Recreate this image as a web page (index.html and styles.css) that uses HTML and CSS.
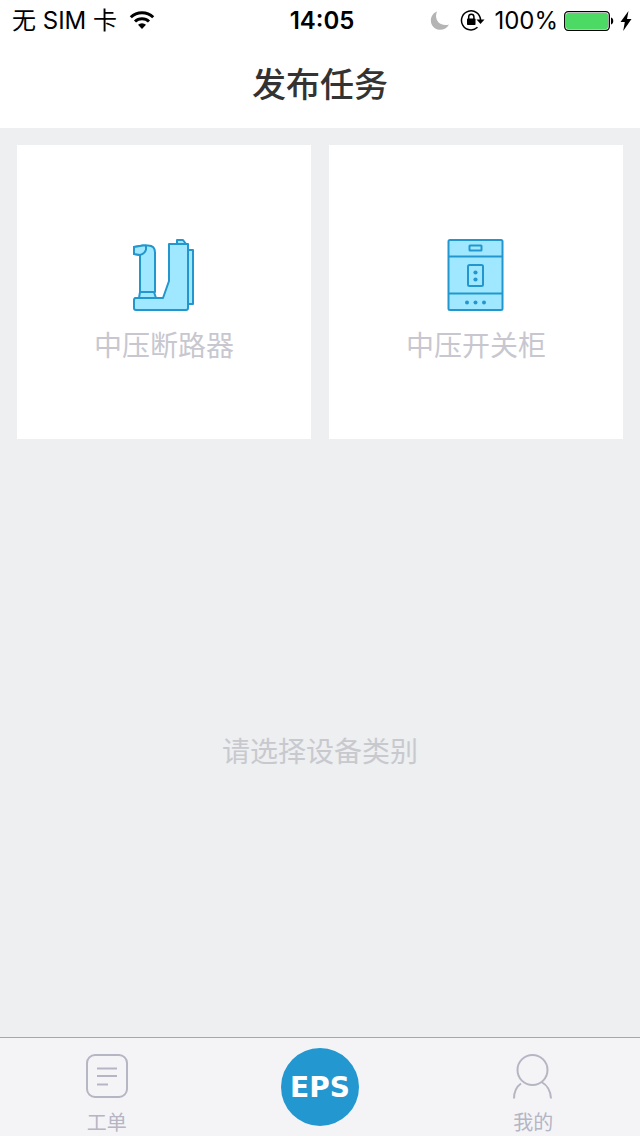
FILE: index.html
```html
<!DOCTYPE html>
<html lang="zh-CN">
<head>
<meta charset="utf-8">
<meta name="viewport" content="width=device-width, initial-scale=1">
<title>发布任务</title>
<link rel="stylesheet" href="styles.css">
</head>
<body>
<div class="status">
  <div class="status-side">
    <span>无 SIM 卡</span>
    <svg width="26" height="20" viewBox="0 0 26 20" fill="none" stroke="#000" stroke-width="3">
      <path d="M1.8 6.200A16 16 0 0 1 24.2 6.200M6 10.500a10 10 0 0 1 14 0"/>
      <path d="M13 18l-4-4.2a5.8 5.8 0 0 1 8 0z" fill="#000" stroke="none"/>
    </svg>
  </div>
  <time class="clock">14:05</time>
  <div class="status-side status-right">
    <svg width="20" height="20" viewBox="0 0 20 20"><path d="M7 .5C-2 4-1 18 9.500 18.800Q16 19 19 13.500C10 16 3.500 9 7 .5z" fill="#b4b4b4"/></svg>
    <svg class="lock" width="26" height="22" viewBox="0 0 26 22" fill="none" stroke="#000">
      <path d="M17.500 17.300A9.500 9.500 0 1 1 20.500 10" stroke-width="1.500"/>
      <path d="M16.500 9.500h8L20.500 14z" fill="#000" stroke="none"/>
      <rect x="7" y="8.500" width="8.500" height="6.500" rx=".8" fill="#000" stroke="none"/>
      <path d="M8.700 9V6.800a2.600 2.600 0 0 1 5.200 0V9" stroke-width="1.500"/>
    </svg>
    <span>100%</span>
    <svg width="50" height="20" viewBox="0 0 50 20">
      <rect x=".7" y=".7" width="44.600" height="18.600" rx="3.500" fill="#fff" stroke="#000" stroke-width="1.300"/>
      <rect x="2" y="2" width="42" height="16" rx="2" fill="#4cd964"/>
      <path d="M47 6.500c3 .8 3 6.200 0 7z"/>
    </svg>
    <svg width="12" height="20" viewBox="0 0 12 20"><path d="M8.500 0L.500 11h4.300L3.200 20l8.300-12H7z"/></svg>
  </div>
</div>
<header class="header"><h1 class="title">发布任务</h1></header>
<main class="main">
  <div class="cards">
    <button class="card" type="button">
      <svg width="64" height="74" viewBox="0 0 64 74" fill="#a0e8ff" stroke="#2397cd" stroke-width="2" stroke-linejoin="round">
        <path d="M56 12h5v54h-5z"/>
        <path d="M45 6V2h6l3 4z"/>
        <path d="M8 54V17l-6-1V9l9-1.500h5q7 0 7 7V54z"/>
        <path d="M2 9l9-1.500h3v4q-1 4-6 5.500l-6-1z"/>
        <path d="M3 60h28l6-17V6h19v64q0 2-2 2H4q-2 0-2-2v-8q0-2 2-2z"/>
        <path d="M7 60l1-6h14l2 6z"/>
      </svg>
      <span>中压断路器</span>
    </button>
    <button class="card" type="button">
      <svg width="58" height="74" viewBox="0 0 58 74" fill="#a0e8ff" stroke="#2397cd" stroke-width="2" stroke-linejoin="round">
        <rect x="1.500" y="2" width="54" height="70" rx="1.500"/>
        <path d="M2 18.500h54M2 55.500h54"/>
        <rect x="22.500" y="7.500" width="12" height="5" rx=".5"/>
        <rect x="21" y="27" width="15" height="21" rx="1.500"/>
        <g fill="#2397cd" stroke="none"><circle cx="28.500" cy="34.500" r="2.100"/><circle cx="28.500" cy="41.500" r="2.100"/><circle cx="20" cy="64.500" r="2"/><circle cx="28.500" cy="64.500" r="2"/><circle cx="37" cy="64.500" r="2"/></g>
      </svg>
      <span>中压开关柜</span>
    </button>
  </div>
  <p class="hint">请选择设备类别</p>
</main>
<nav class="tabs">
  <a class="tab" href="#orders">
    <svg width="42" height="46" viewBox="0 0 42 46" fill="none" stroke="#b6b5c4" stroke-width="2">
      <rect x="1" y="2" width="40" height="42" rx="8"/>
      <path d="M11 15.500h20M11 23h20M11 31.500h11"/>
    </svg>
    <span>工单</span>
  </a>
  <a class="brand" href="#publish">EPS</a>
  <a class="tab" href="#mine">
    <svg width="42" height="46" viewBox="0 0 42 46" fill="none" stroke="#b6b5c4" stroke-width="2">
      <circle cx="20.500" cy="17" r="15"/>
      <path d="M9 30.500q-7 5-7 15M29.500 29q9 5 9.500 16.500"/>
    </svg>
    <span>我的</span>
  </a>
</nav>
</body>
</html>
```
FILE: styles.css
```css
* {
  box-sizing: border-box;
}

body {
  display: flex;
  flex-direction: column;
  min-height: 100vh;
  margin: 0;
  background: #edeff1;
  font-family: Inter, "Noto Sans CJK SC", sans-serif;
}

svg {
  display: block;
  flex: none;
}

.status {
  display: grid;
  grid-template-columns: 1fr auto 1fr;
  align-items: center;
  padding: 2px 8px 0 12px;
  background: #fff;
  color: #000;
  font-size: 24px;
  line-height: 38px;
  white-space: nowrap;
}

.status-side {
  display: flex;
  align-items: center;
  gap: 12px;
}

.status-right {
  justify-content: flex-end;
  gap: 6px;
}

.lock {
  margin: 0 2px 0 4px;
}

.clock {
  font-weight: 600;
}

.header {
  background: #fff;
}

.title {
  margin: 0;
  padding-top: 2px;
  color: #333;
  font-size: 34px;
  font-weight: 500;
  line-height: 86px;
  text-align: center;
}

.main {
  display: flex;
  flex: 1;
  flex-direction: column;
  padding: 17px;
}

.cards {
  display: grid;
  grid-template-columns: 1fr 1fr;
  gap: 18px;
}

.card {
  display: flex;
  flex-direction: column;
  align-items: center;
  justify-content: center;
  gap: 14px;
  aspect-ratio: 1;
  padding: 20px 0 0;
  border: 0;
  background: #fff;
  color: #c8c7cf;
  font: inherit;
  font-size: 28px;
  line-height: 40px;
}

.hint {
  margin: auto;
  padding-top: 44px;
  color: #c8c9ce;
  font-size: 28px;
  line-height: 40px;
}

.tabs {
  display: grid;
  grid-template-columns: 1fr 1fr 1fr;
  justify-items: center;
  height: 99px;
  border-top: 1px solid #a5a7ab;
  background: #f4f4f7;
}

.tab {
  display: flex;
  flex-direction: column;
  align-items: center;
  gap: 8px;
  padding-top: 15px;
  color: #b6b5c4;
  font-size: 20px;
  line-height: 32px;
  text-decoration: none;
}

.brand {
  width: 78px;
  height: 78px;
  margin-top: 10px;
  border-radius: 50%;
  background: #2397cf;
  color: #fff;
  font-family: "DejaVu Sans", sans-serif;
  font-size: 28px;
  font-weight: 700;
  line-height: 80px;
  text-align: center;
  text-decoration: none;
}
```
